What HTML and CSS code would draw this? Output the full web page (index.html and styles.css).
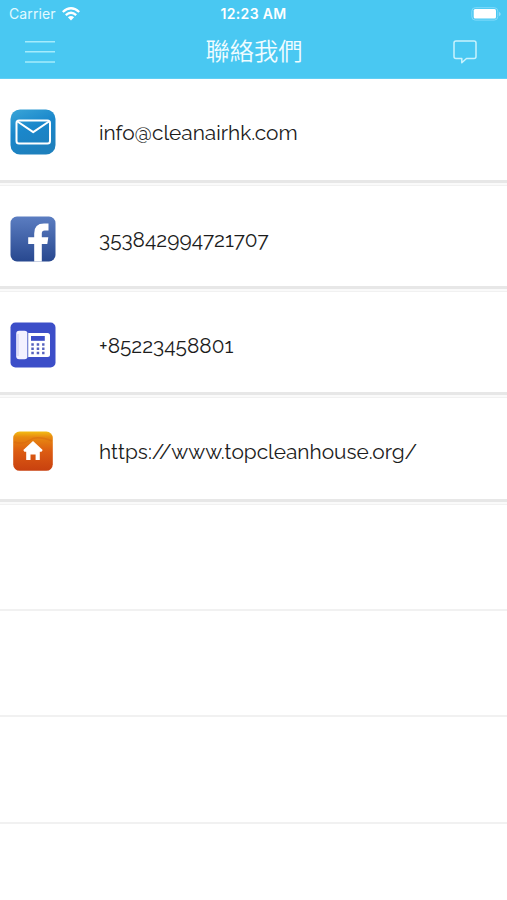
FILE: index.html
```html
<!DOCTYPE html>
<html lang="zh-Hant">
<head>
<meta charset="utf-8">
<title>聯絡我們</title>
<link rel="stylesheet" href="styles.css">
</head>
<body>
<header class="header">
  <div class="status">
    <div class="carrier"><span>Carrier</span>
      <svg width="18" height="14" viewBox="0 0 18 14" fill="none" stroke="#fff" stroke-width="2.3"><path d="M.8 5Q9-2.4 17.2 5M3.8 8.2Q9 3.4 14.2 8.2"/><path d="M5.9 10.3Q9 7.7 12.1 10.3L9 13.5Z" fill="#fff" stroke="none"/></svg>
    </div>
    <time class="time">12:23 AM</time>
    <svg class="battery" width="31" height="14" viewBox="0 0 31 14"><rect x=".8" y=".7" width="26" height="12.4" rx="3.5" fill="none" stroke="#80dafa"/><rect x="2.7" y="2" width="22.3" height="9.4" rx="1.5" fill="#fff"/><path d="M28.2 4.7Q31 7 28.2 9.3Z" fill="#a0e3fb"/></svg>
  </div>
  <nav class="nav">
    <svg width="30" height="24" viewBox="0 0 30 24" stroke="#a4ebfc" stroke-width="1.6"><path d="M0 1.8H30M0 11.8H30M0 22H30"/></svg>
    <h1 class="title">聯絡我們</h1>
    <svg width="24" height="24" viewBox="0 0 24 24" fill="none" stroke="#c9f2fd" stroke-width="1.5" stroke-linejoin="round"><path d="M3 1H21Q23 1 23 3V16.5Q23 18.5 21 18.5H13.5L8.8 22.8V18.5H3Q1 18.5 1 16.5V3Q1 1 3 1Z"/></svg>
  </nav>
</header>
<main class="list">
  <div class="row contact">
    <svg class="icon" viewBox="0 0 46 46"><defs><linearGradient id="mail" x2=".4" y2="1"><stop stop-color="#3ba6d8"/><stop offset=".5" stop-color="#1a87cb"/><stop offset="1" stop-color="#1e80bd"/></linearGradient></defs><rect x=".5" y=".5" width="45" height="45" rx="9.5" fill="url(#mail)"/><g fill="none" stroke="#fff" stroke-width="2" stroke-linejoin="round"><rect x="6.5" y="11.5" width="33.5" height="23" rx="2.5"/><path d="M7.5 12.5L23.2 23.2L39 12.5"/></g></svg>
    <span class="text">info@cleanairhk.com</span>
  </div>
  <div class="row contact">
    <svg class="icon" viewBox="0 0 46 46"><defs><linearGradient id="social" x2="0" y2="1"><stop stop-color="#5b7dc1"/><stop offset="1" stop-color="#28488f"/></linearGradient></defs><rect x=".5" y=".5" width="45" height="45" rx="6.5" fill="url(#social)"/><path d="M24.2 45.5V28H18.2V21.2H24.2V17.5Q24.2 7.6 34 7.6H38.5V14.5H34.7Q31.8 14.5 31.8 17.5V21.2H38.3L37.3 28H31.8V45.5Z" fill="#fff"/></svg>
    <span class="text">353842994721707</span>
  </div>
  <div class="row contact">
    <svg class="icon" viewBox="0 0 46 46"><rect x=".5" y=".5" width="45" height="45" rx="5" fill="#3c4ec8"/><path d="M18 11H37.5Q40 11 40 13.5V32.5Q40 35 37.5 35H18Z" fill="#fff"/><rect x="6.2" y="8.8" width="11.3" height="28.5" rx="3" fill="#f3f1ff"/><path d="M8 12V34" stroke="#c9c8ef" stroke-width="1"/><path d="M17.8 10V36" stroke="#7380d3" stroke-width="1"/><path d="M21 14H34.8V18.8H21Z" fill="#3c4ec8"/><path d="M21.3 22.5H34.5M21.3 26.8H34.5M21.3 31H34.5" stroke="#5662be" stroke-width="2.5" stroke-dasharray="2.5 2.9"/></svg>
    <span class="text">+85223458801</span>
  </div>
  <div class="row contact">
    <svg class="icon" viewBox="0 0 46 46"><defs><linearGradient id="home" x2="0" y2="1"><stop stop-color="#f3bd14"/><stop offset=".14" stop-color="#e88a10"/><stop offset=".5" stop-color="#dc5c12"/><stop offset="1" stop-color="#c8400f"/></linearGradient></defs><rect x="3.2" y="3.6" width="39.6" height="39.2" rx="6.5" fill="url(#home)"/><path d="M4 14Q13 17 20 12T42 13" fill="none" stroke="#d8670f" stroke-width="1.5" opacity=".5"/><path d="M23 13L32.7 22L31.5 23.8H29.8V32H25.6V26.5H20.5V32H16.2V23.8H14.4L13.3 22Z" fill="#fff"/></svg>
    <span class="text">https://www.topcleanhouse.org/</span>
  </div>
  <div class="row empty"></div>
  <div class="row empty"></div>
  <div class="row empty"></div>
</main>
</body>
</html>
```
FILE: styles.css
```css
* { box-sizing: border-box; }
body { margin: 0; background: #fff; height: 900px; overflow: hidden; }
svg { display: block; flex: none; }
.header { height: 79.2px; background: #49c8f2; color: #fff; border-bottom: 1px solid #61cff5; }
.status { display: grid; grid-template-columns: 1fr auto 1fr; align-items: center; height: 27px; padding: 0 5px 0 5px; font-family: Inter, sans-serif; }
.carrier { display: flex; align-items: center; gap: 6px; padding-left: 4px; font-size: 14px; letter-spacing: .1px; color: #e2faff; }
.time { font-size: 14px; font-weight: 600; letter-spacing: .35px; }
.battery { justify-self: end; }
.nav { display: flex; align-items: center; justify-content: space-between; height: 50px; padding: 0 30px 0 25px; }
.title { margin: 0; padding-bottom: 4px; font: 350 24.3px/30px "Noto Sans CJK TC", sans-serif; color: #f0fcff; }
.row { height: 106.35px; }
.contact { display: flex; align-items: center; padding: 0 10px; background: linear-gradient(#e7e7e7 0 3px, #fafafa 3px 5px, #f1f1f1 5px) 0 100% / 100% 6px no-repeat; }
.icon { width: 46px; height: 46px; }
.text { margin: 2px 0 0 43px; font: 400 20.85px/30px Raleway, Lato, sans-serif; font-variant-numeric: oldstyle-nums; color: #1c1c1c; white-space: nowrap; }
.empty { border-bottom: 2px solid #f1f1f1; }
```
